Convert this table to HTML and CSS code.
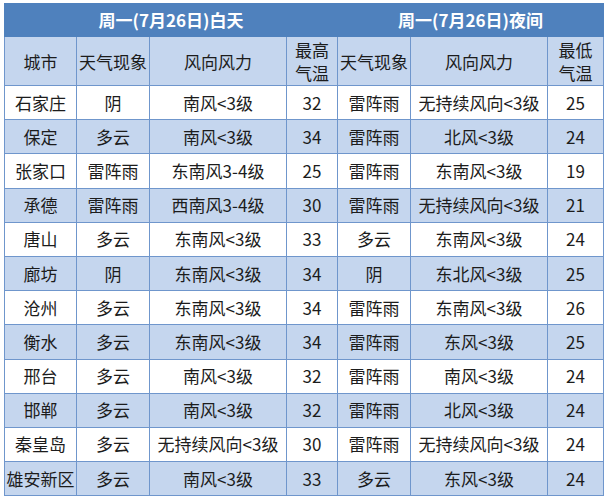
FILE: index.html
```html
<!DOCTYPE html>
<html lang="zh">
<head>
<meta charset="utf-8">
<link rel="stylesheet" href="styles.css">
</head>
<body>
<table class="wx">
<colgroup>
<col class="c-city"><col class="c-w"><col class="c-wind"><col class="c-t1"><col class="c-w"><col class="c-wind"><col class="c-t2">
</colgroup>
<thead>
<tr class="title"><th colspan="4">周一(7月26日)白天</th><th colspan="3">周一(7月26日)夜间</th></tr>
<tr class="head"><th>城市</th><th>天气现象</th><th>风向风力</th><th>最高<br>气温</th><th>天气现象</th><th>风向风力</th><th>最低<br>气温</th></tr>
</thead>
<tbody>
<tr><td>石家庄</td><td>阴</td><td>南风&lt;3级</td><td>32</td><td>雷阵雨</td><td>无持续风向&lt;3级</td><td>25</td></tr>
<tr><td>保定</td><td>多云</td><td>南风&lt;3级</td><td>34</td><td>雷阵雨</td><td>北风&lt;3级</td><td>24</td></tr>
<tr><td>张家口</td><td>雷阵雨</td><td>东南风3-4级</td><td>25</td><td>雷阵雨</td><td>东南风&lt;3级</td><td>19</td></tr>
<tr><td>承德</td><td>雷阵雨</td><td>西南风3-4级</td><td>30</td><td>雷阵雨</td><td>无持续风向&lt;3级</td><td>21</td></tr>
<tr><td>唐山</td><td>多云</td><td>东南风&lt;3级</td><td>33</td><td>多云</td><td>东南风&lt;3级</td><td>24</td></tr>
<tr><td>廊坊</td><td>阴</td><td>东南风&lt;3级</td><td>34</td><td>阴</td><td>东北风&lt;3级</td><td>25</td></tr>
<tr><td>沧州</td><td>多云</td><td>东南风&lt;3级</td><td>34</td><td>雷阵雨</td><td>东南风&lt;3级</td><td>26</td></tr>
<tr><td>衡水</td><td>多云</td><td>东南风&lt;3级</td><td>34</td><td>雷阵雨</td><td>东风&lt;3级</td><td>25</td></tr>
<tr><td>邢台</td><td>多云</td><td>南风&lt;3级</td><td>32</td><td>雷阵雨</td><td>南风&lt;3级</td><td>24</td></tr>
<tr><td>邯郸</td><td>多云</td><td>南风&lt;3级</td><td>32</td><td>雷阵雨</td><td>北风&lt;3级</td><td>24</td></tr>
<tr><td>秦皇岛</td><td>多云</td><td>无持续风向&lt;3级</td><td>30</td><td>雷阵雨</td><td>无持续风向&lt;3级</td><td>24</td></tr>
<tr><td>雄安新区</td><td>多云</td><td>南风&lt;3级</td><td>33</td><td>多云</td><td>东风&lt;3级</td><td>24</td></tr>
</tbody>
</table>
</body>
</html>
```
FILE: styles.css
```css
html, body {
  margin: 0;
  padding: 0;
  background: #ffffff;
}
body {
  padding: 3px 2px 0 4px;
  font-family: "Noto Sans CJK SC", "Noto Sans", sans-serif;
  color: #1c1c1c;
}
.wx {
  border-collapse: collapse;
  table-layout: fixed;
  width: 599px;
}
.c-city { width: 72px; }
.c-w { width: 73px; }
.c-wind { width: 137px; }
.c-t1 { width: 51px; }
.c-t2 { width: 56px; }
.wx th, .wx td {
  border: 1px solid #6f96cc;
  padding: 0;
  text-align: center;
  vertical-align: middle;
  font-size: 17px;
  font-weight: normal;
  white-space: nowrap;
  overflow: hidden;
}
.title th {
  height: 33px;
  background: #4f81bd;
  color: #ffffff;
  font-weight: bold;
  font-size: 17px;
  border-color: #4f81bd;
  border-top: none;
}
.head th {
  height: 48px;
  background: #c5d6ee;
  line-height: 23px;
}
.wx tbody td {
  height: 33.2px;
  line-height: 20px;
  background: #ffffff;
}
.wx tbody tr:nth-child(even) td {
  background: #c5d6ee;
}
```
